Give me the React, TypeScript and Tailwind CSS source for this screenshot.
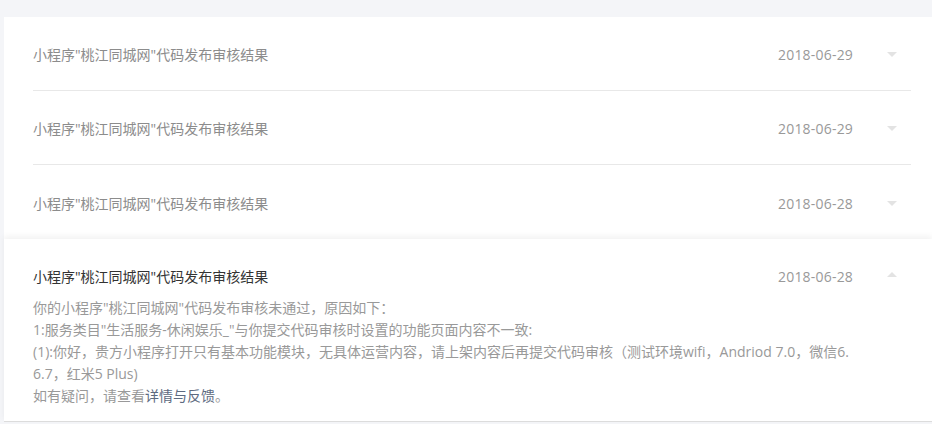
import React from "react";

type Notice = {
  id: number;
  title: string;
  date: string;
  open?: boolean;
};

const notices: Notice[] = [
  { id: 1, title: "小程序\"桃江同城网\"代码发布审核结果", date: "2018-06-29" },
  { id: 2, title: "小程序\"桃江同城网\"代码发布审核结果", date: "2018-06-29" },
  { id: 3, title: "小程序\"桃江同城网\"代码发布审核结果", date: "2018-06-28" },
  { id: 4, title: "小程序\"桃江同城网\"代码发布审核结果", date: "2018-06-28", open: true },
];

const font = {
  fontFamily: '"Open Sans", "Noto Sans CJK SC", sans-serif',
};

function Caret({ up }: { up?: boolean }) {
  return (
    <svg width="10" height="5" viewBox="0 0 10 5" className="shrink-0">
      {up ? <path d="M0 5 L5 0 L10 5 Z" fill="#e3e3e3" /> : <path d="M0 0 L5 5 L10 0 Z" fill="#e3e3e3" />}
    </svg>
  );
}

function Row({ n, last }: { n: Notice; last?: boolean }) {
  return (
    <div className="pl-[29px] pr-[21px]">
      <div className={`flex items-center h-[74px] pt-[2px] ${last ? "" : "border-b border-[#e8e8e8]"}`}>
        <div className="flex-1 text-[14px] text-[#8c8c8c]">{n.title}</div>
        <div className="text-[14px] text-[#999] w-[79px] tracking-[0.2px]">{n.date}</div>
        <div className="w-[54px] flex justify-end pr-[14px]">
          <Caret />
        </div>
      </div>
    </div>
  );
}

function OpenRow({ n }: { n: Notice }) {
  return (
    <div className="pl-[29px] pr-[21px] pb-[14px] shadow-[0_-3px_6px_rgba(0,0,0,0.05)] border-b border-[#dcdcdc]">
      <div className="flex items-center pt-[28px] pb-[10px] leading-[20px]">
        <div className="flex-1 text-[14px] text-[#333]">{n.title}</div>
        <div className="text-[14px] text-[#999] w-[79px] tracking-[0.2px]">{n.date}</div>
        <div className="w-[54px] flex justify-end pr-[14px] -mt-[6px]">
          <Caret up />
        </div>
      </div>
      <div className="text-[14px] text-[#999] leading-[22px] whitespace-nowrap">
        <p>你的小程序"桃江同城网"代码发布审核未通过，原因如下：</p>
        <p>1:服务类目"生活服务-休闲娱乐_"与你提交代码审核时设置的功能页面内容不一致:</p>
        <p>(1):你好，贵方小程序打开只有基本功能模块，无具体运营内容，请上架内容后再提交代码审核（测试环境wifi，Andriod 7.0，微信6.</p>
        <p>6.7，红米5 Plus)</p>
        <p>
          如有疑问，请查看<span className="text-[#5d6a80]">详情与反馈</span>。
        </p>
      </div>
    </div>
  );
}

export default function App() {
  return (
    <div className="min-h-screen bg-[#f4f5f8] pt-[17px] pl-[4px]" style={font}>
      <div className="bg-white">
        {notices.map((n, i) =>
          n.open ? <OpenRow key={n.id} n={n} /> : <Row key={n.id} n={n} last={i === 2} />
        )}
      </div>
    </div>
  );
}
